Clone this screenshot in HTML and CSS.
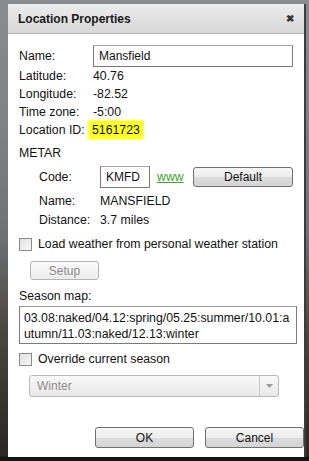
FILE: index.html
```html
<!DOCTYPE html>
<html>
<head>
<meta charset="utf-8">
<link rel="stylesheet" href="styles.css">
</head>
<body>
<div class="backdrop">
  <div class="dialog">
    <div class="titlebar">
      <span class="title">Location Properties</span>
      <span class="close">&#x2716;</span>
    </div>
    <div class="content">
      <div class="row row-input">
        <span class="label">Name:</span>
        <span class="input name-input">Mansfield</span>
      </div>
      <div class="row"><span class="label">Latitude:</span><span class="value">40.76</span></div>
      <div class="row"><span class="label">Longitude:</span><span class="value">-82.52</span></div>
      <div class="row"><span class="label">Time zone:</span><span class="value">-5:00</span></div>
      <div class="row"><span class="label">Location ID:</span><span class="value"><span class="hl">5161723</span></span></div>
      <div class="row section">METAR</div>
      <div class="metar">
        <span class="m-label">Code:</span>
        <span class="input code-input">KMFD</span>
        <span class="www">www</span>
        <span class="btn default-btn">Default</span>
        <span class="m-label m-name">Name:</span>
        <span class="m-value m-name">MANSFIELD</span>
        <span class="m-label m-dist">Distance:</span>
        <span class="m-value m-dist">3.7 miles</span>
      </div>
      <div class="row check-row"><span class="checkbox"></span><span>Load weather from personal weather station</span></div>
      <div class="setup-wrap"><span class="btn setup-btn disabled">Setup</span></div>
      <div class="row season-label">Season map:</div>
      <div class="textarea">03.08:naked/04.12:spring/05.25:summer/10.01:a<br>utumn/11.03:naked/12.13:winter</div>
      <div class="row check-row override"><span class="checkbox"></span><span>Override current season</span></div>
      <div class="select">
        <span class="select-text">Winter</span>
        <span class="select-arrow"><svg width="7" height="4" viewBox="0 0 7 4"><path d="M0 0 L7 0 L3.5 4 Z" fill="#9a9a9a"/></svg></span>
      </div>
      <div class="buttons">
        <span class="btn ok-btn">OK</span>
        <span class="btn cancel-btn">Cancel</span>
      </div>
    </div>
  </div>
</div>
</body>
</html>
```
FILE: styles.css
```css
html, body {
  margin: 0;
  padding: 0;
}
body {
  width: 309px;
  height: 461px;
  overflow: hidden;
  font-family: "Liberation Sans", Arial, sans-serif;
  font-size: 12.3px;
  color: #111;
}
.backdrop {
  width: 309px;
  height: 461px;
  box-sizing: border-box;
  padding: 4px 0 0 8px;
  background:
    linear-gradient(to bottom, rgba(0,0,0,0) 0, rgba(0,0,0,0) 456px, #141414 457px),
    linear-gradient(to bottom, #8a8c8e 0%, #7c8085 30%, #6f7378 50%, #4d4a44 70%, #3a3630 85%, #2a2824 100%);
}
.dialog {
  width: 298px;
  height: 453px;
  background: #fff;
  box-sizing: border-box;
  border-right: 2px solid #3c3c3c;
  display: flex;
  flex-direction: column;
}
.titlebar {
  height: 30px;
  flex: none;
  box-sizing: border-box;
  background: linear-gradient(to bottom, #ececec, #d6d6d6);
  border-bottom: 1px solid #b8b8b8;
  display: flex;
  align-items: center;
  justify-content: space-between;
  padding: 0 10px 0 10px;
}
.title {
  font-weight: bold;
  font-size: 12px;
  color: #1a1a1a;
}
.close {
  font-size: 10px;
  color: #333;
  font-weight: bold;
}
.content {
  padding: 11px 0 0 11px;
  display: flex;
  flex-direction: column;
}
.row {
  height: 18px;
  display: flex;
  align-items: center;
  flex: none;
}
.row-input {
  height: 22px;
}
.label {
  width: 74px;
  flex: none;
}
.value {
  flex: none;
}
.hl {
  background: #ffff2a;
  padding: 2px 3px;
  margin-left: -4px;
  box-shadow: 0 0 2px 1px #ffff60;
}
.input {
  box-sizing: border-box;
  height: 22px;
  border: 1px solid #7a7a7a;
  border-top-color: #a8a8a8;
  display: flex;
  align-items: center;
  padding-left: 5px;
  font-size: 12px;
}
.name-input {
  width: 200px;
}
.section {
  margin-top: 5px;
}
.metar {
  margin: 4px 0 0 20px;
  display: grid;
  grid-template-columns: 61px 50px 43px 100px;
  grid-template-rows: 22px 20px 19px;
  align-items: center;
  width: 254px;
}
.m-name, .m-dist {
  align-self: end;
}
.m-value {
  grid-column: 2 / 5;
}
.www {
  color: #3f9e2f;
  text-decoration: underline;
  margin-left: 7px;
}
.btn {
  box-sizing: border-box;
  display: flex;
  align-items: center;
  justify-content: center;
  border: 1px solid #707070;
  border-radius: 3px;
  background: linear-gradient(to bottom, #f6f6f6 0%, #ececec 50%, #dcdcdc 51%, #d4d4d4 100%);
  font-size: 12px;
  color: #111;
}
.default-btn {
  height: 20px;
}
.check-row {
  margin-top: 8px;
}
.checkbox {
  width: 13px;
  height: 13px;
  box-sizing: border-box;
  border: 1px solid #8a8a8a;
  background: linear-gradient(to bottom right, #e0e0e0, #f8f8f8);
  margin-right: 6px;
  flex: none;
}
.setup-wrap {
  padding-left: 11px;
  margin-top: 8px;
  display: flex;
}
.setup-btn {
  width: 69px;
  height: 19px;
}
.disabled {
  border-color: #b4b4b4;
  color: #8a8a8a;
  background: linear-gradient(to bottom, #fafafa, #ececec);
}
.season-label {
  margin-top: 7px;
}
.textarea {
  box-sizing: border-box;
  width: 278px;
  height: 38px;
  margin-top: 1px;
  border: 1px solid #7a7a7a;
  border-top-color: #9a9a9a;
  padding: 3px 0 0 4px;
  line-height: 16px;
}
.override {
  margin-top: 6px;
}
.select {
  margin: 7px 0 0 10px;
  width: 250px;
  height: 22px;
  box-sizing: border-box;
  border: 1px solid #b8b8b8;
  border-radius: 3px;
  background: linear-gradient(to bottom, #f8f8f8, #e8e8e8);
  display: flex;
  align-items: center;
}
.select-text {
  flex: 1;
  padding-left: 7px;
  color: #8c8c8c;
  font-size: 12px;
}
.select-arrow {
  width: 18px;
  height: 20px;
  border-left: 1px solid #c8c8c8;
  display: flex;
  align-items: center;
  justify-content: center;
}
.buttons {
  margin-top: 30px;
  display: flex;
  gap: 11px;
  padding-left: 76px;
}
.ok-btn, .cancel-btn {
  width: 100px;
  height: 21px;
}
```
